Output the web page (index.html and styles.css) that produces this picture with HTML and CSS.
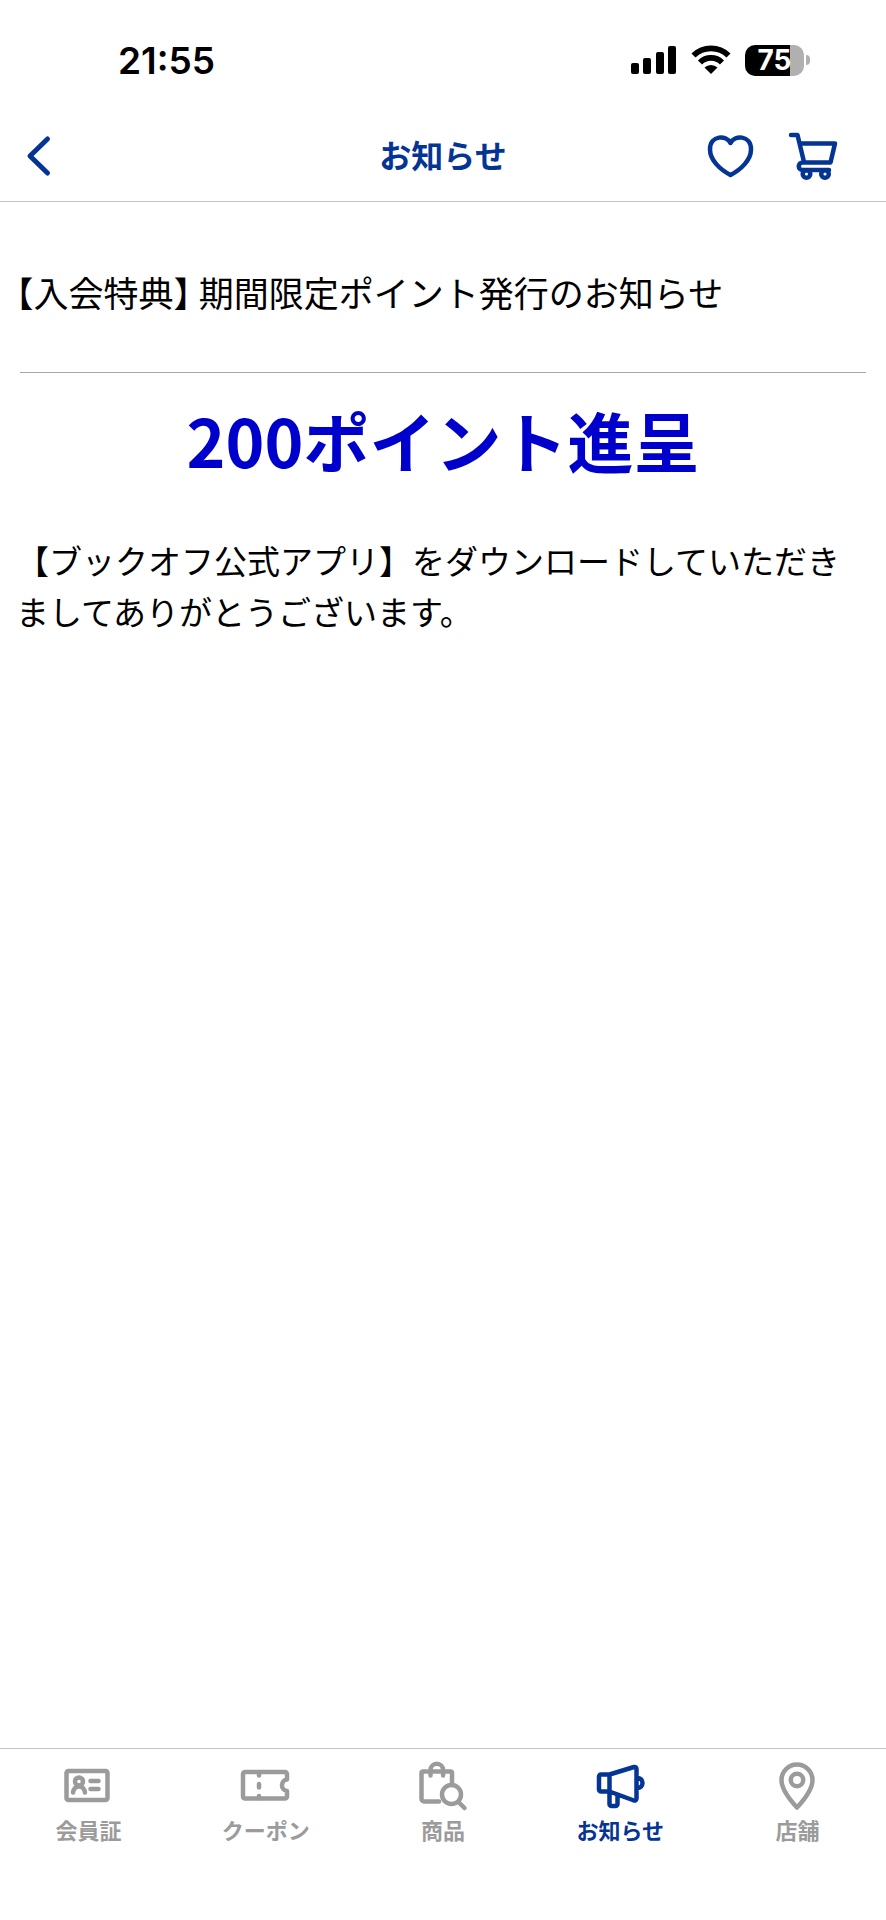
FILE: index.html
```html
<!DOCTYPE html>
<html lang="ja">
<head>
  <meta charset="UTF-8">
  <meta name="viewport" content="width=device-width, initial-scale=1.0">
  <title>お知らせ</title>
  <link rel="stylesheet" href="styles.css">
</head>
<body>
  <div class="status-bar">
    <span class="time">21:55</span>
    <div class="status-icons">
      <svg class="signal" width="46" height="30" viewBox="0 0 46 30">
        <rect x="0" y="18" width="8" height="11" rx="2"/>
        <rect x="12" y="13" width="8" height="16" rx="2"/>
        <rect x="25" y="7" width="8" height="22" rx="2"/>
        <rect x="37" y="1" width="8" height="28" rx="2"/>
      </svg>
      <svg class="wifi" width="40" height="30" viewBox="0 0 40 30">
        <path d="M2.500 10.500a25 25 0 0 1 35 0M9 17.500a15.500 15.500 0 0 1 22 0" fill="none" stroke="#000" stroke-width="5.800"/>
        <path d="M20 29l-6.500-6.500a9.500 9.500 0 0 1 13 0z"/>
      </svg>
      <div class="battery"><span class="battery-level">75</span></div>
    </div>
  </div>

  <header class="header">
    <button class="icon-button back" aria-label="戻る">
      <svg width="28" height="44" viewBox="0 0 28 44"><path d="M23.500 5L6 22L23.500 39"/></svg>
    </button>
    <h1 class="header-title">お知らせ</h1>
    <div class="header-actions">
      <button class="icon-button" aria-label="お気に入り">
        <svg width="48" height="48" viewBox="0 0 48 48">
          <path d="M24.500 11C21 3 4 2.500 4 17.500C4 28 14 37.500 24.500 43C35 37.500 45 28 45 17.500C45 2.500 28 3 24.500 11Z"/>
        </svg>
      </button>
      <button class="icon-button" aria-label="カート">
        <svg width="52" height="52" viewBox="0 0 52 52">
          <path d="M4 5h6.500L17 32M12.500 13.500H48L43.500 32.500H15.500a3.700 3.700 0 0 0 0 7.500H42"/>
          <circle cx="19.500" cy="44" r="3.800"/>
          <circle cx="38" cy="44" r="3.800"/>
        </svg>
      </button>
    </div>
  </header>

  <main class="content">
    <h2 class="news-title">【入会特典】 期間限定ポイント発行のお知らせ</h2>
    <p class="headline">200ポイント進呈</p>
    <p class="message">【ブックオフ公式アプリ】をダウンロードしていただきましてありがとうございます。</p>
  </main>

  <nav class="tab-bar">
    <a class="tab" href="#card">
      <svg width="52" height="52" viewBox="0 0 52 52">
        <rect x="3.500" y="11" width="41" height="29" rx="2"/>
        <circle cx="16" cy="21.500" r="4"/>
        <path d="M10 32.500c1.500-8 10.500-8 12 0M27.500 21h8M27.500 29h8"/>
      </svg>
      <span>会員証</span>
    </a>
    <a class="tab" href="#coupon">
      <svg width="52" height="52" viewBox="0 0 52 52">
        <path d="M5 12H45a2 2 0 0 1 2 2V19.500a5.800 5.800 0 0 0 0 11.500V36.500a2 2 0 0 1-2 2H5a2 2 0 0 1-2-2V14a2 2 0 0 1 2-2Z"/>
        <path d="M19 13v2.500M19 24v3.500M19 36v2"/>
      </svg>
      <span>クーポン</span>
    </a>
    <a class="tab" href="#items">
      <svg width="52" height="52" viewBox="0 0 52 52">
        <path d="M22 41.500H7a2.500 2.500 0 0 1-2.500-2.500V13a1.500 1.500 0 0 1 1.500-1.500H33.500a1.500 1.500 0 0 1 1.500 1.500V25M13.500 15.500V10a6.300 6.300 0 0 1 12.600 0V15.500"/>
        <circle cx="34.500" cy="34.500" r="9.500"/>
        <path d="M41.500 42l6 6"/>
      </svg>
      <span>商品</span>
    </a>
    <a class="tab active" href="#news">
      <svg width="52" height="52" viewBox="0 0 52 52">
        <path d="M15.500 14.500H7a2 2 0 0 0-2 2V29.500a2 2 0 0 0 2 2H15.500ZM15.500 14.500L40 7a2 2 0 0 1 2.500 2V38.500a2 2 0 0 1-2.500 2L15.500 31.500M43.500 18a4.800 4.800 0 0 1 0 10M15.500 32V44a2 2 0 0 0 2 2h4a2 2 0 0 0 2-2V35"/>
      </svg>
      <span>お知らせ</span>
    </a>
    <a class="tab" href="#shops">
      <svg width="52" height="52" viewBox="0 0 52 52">
        <path d="M26 47.500C19 40 10.500 29 10.500 20a15.500 15.500 0 0 1 31 0C41.500 29 33 40 26 47.500Z"/>
        <circle cx="26" cy="20" r="6.200"/>
      </svg>
      <span>店舗</span>
    </a>
  </nav>
</body>
</html>
```

FILE: styles.css
```css
* {
  margin: 0;
  padding: 0;
  box-sizing: border-box;
}

body {
  min-height: 100vh;
  display: flex;
  flex-direction: column;
  background-color: #fff;
  color: #000;
  font-family: "Noto Sans CJK JP", sans-serif;
}

/* Status bar */
.status-bar {
  display: flex;
  justify-content: space-between;
  align-items: center;
  height: 110px;
  padding: 10px 76px 0 118px;
}

.time {
  font-family: Inter, sans-serif;
  font-size: 37px;
  font-weight: 600;
}

.status-icons {
  display: flex;
  align-items: center;
  gap: 14px;
}

.battery {
  display: flex;
  align-items: center;
  gap: 2px;
}

.battery-level {
  width: 59px;
  height: 31px;
  border-radius: 10px;
  background: linear-gradient(to right, #000 76%, #b0b0b0 76%);
  color: #fff;
  font-family: Inter, sans-serif;
  font-size: 28px;
  font-weight: 700;
  line-height: 31px;
  text-align: center;
}

.battery::after {
  content: "";
  width: 4px;
  height: 10px;
  border-radius: 0 5px 5px 0;
  background-color: #b0b0b0;
}

/* Header */
.header {
  display: grid;
  grid-template-columns: 1fr auto 1fr;
  align-items: center;
  height: 92px;
  padding: 0 24px;
  border-bottom: 1px solid #c4c4c4;
  color: #053594;
}

.header-title {
  padding-bottom: 4px;
  font-size: 32px;
  font-weight: 700;
  line-height: 48px;
}

.header-actions {
  display: flex;
  justify-content: flex-end;
  align-items: center;
  gap: 33px;
  padding-right: 23px;
}

.icon-button {
  display: flex;
  border: none;
  background: none;
  color: inherit;
  cursor: pointer;
}

.icon-button svg,
.tab svg {
  fill: none;
  stroke: currentColor;
  stroke-width: 4.5;
  stroke-linecap: round;
  stroke-linejoin: round;
}

.back svg {
  stroke-width: 5;
}

/* Content */
.content {
  flex: 1;
  padding: 0 16px;
}

.news-title {
  margin: 0 4px;
  padding: 64px 0 54px;
  border-bottom: 1px solid #a8a8a8;
  font-size: 35px;
  font-weight: 400;
  line-height: 52px;
  font-feature-settings: "halt";
  text-indent: -4px;
}

.headline {
  margin: 18px 0 47px;
  color: #0000cd;
  font-size: 66px;
  font-weight: 700;
  line-height: 97px;
  text-align: center;
}

.message {
  font-size: 33px;
  line-height: 51px;
}

/* Bottom tabs */
.tab-bar {
  display: grid;
  grid-template-columns: repeat(5, 1fr);
  height: 172px;
  border-top: 1px solid #c4c4c4;
}

.tab {
  display: flex;
  flex-direction: column;
  align-items: center;
  padding-top: 11px;
  color: #9b9b9b;
  font-size: 22px;
  font-weight: 700;
  line-height: 34px;
  text-decoration: none;
}

.tab.active {
  color: #053594;
}
```
